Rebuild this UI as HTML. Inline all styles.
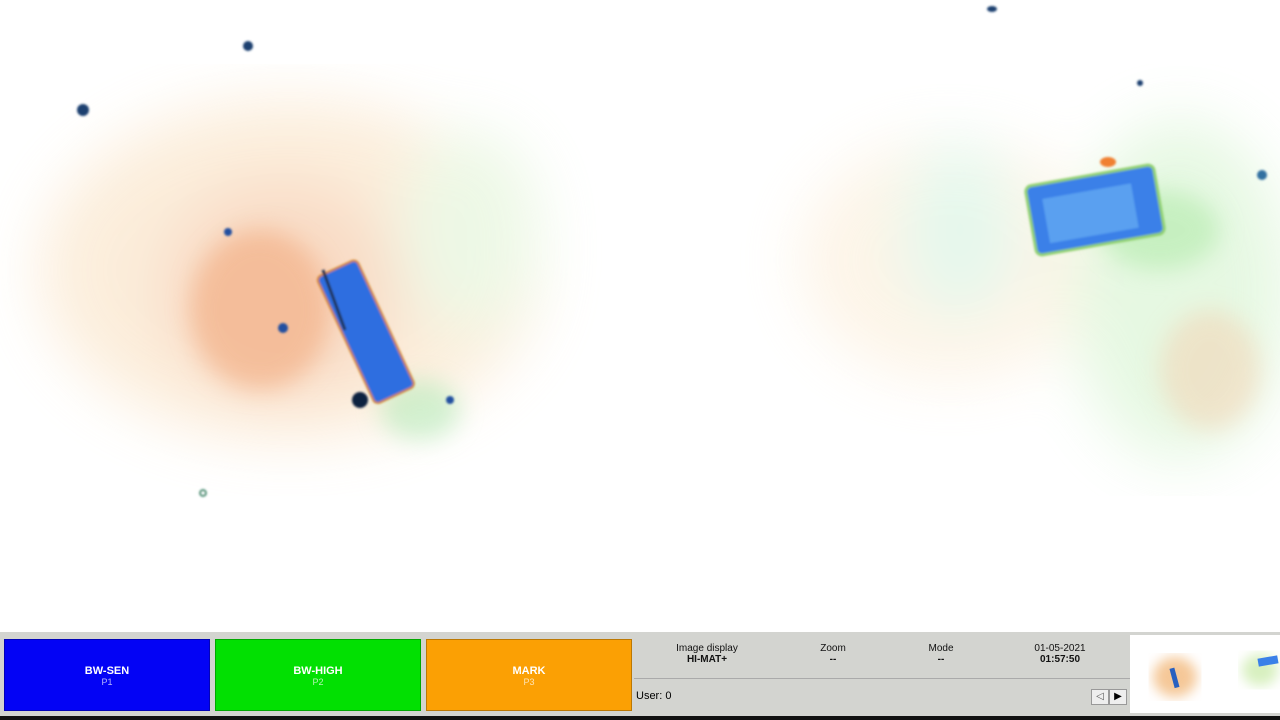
<!DOCTYPE html>
<html><head><style>
body{margin:0;width:1280px;height:720px;overflow:hidden;background:#fff;font-family:"Liberation Sans",sans-serif;position:relative}
.bar{position:absolute;left:0;top:632px;width:1280px;height:84px;background:#d3d4d0}
.blk{position:absolute;left:0;top:716px;width:1280px;height:4px;background:#111}
.btn{position:absolute;top:639px;height:72px;width:206px;text-align:center;color:#fff;font-size:11px;font-weight:bold;box-sizing:border-box;border:1px solid rgba(0,0,0,.25)}
.btn span{display:block;font-weight:normal;font-size:9px;opacity:.7}
.lab{position:absolute;font-size:10px;text-align:center;width:110px;color:#111}
.lab b{display:block;font-size:10px}
</style></head><body>
<svg width="1280" height="632" style="position:absolute;left:0;top:0">
<defs>
<filter id="b1"><feGaussianBlur stdDeviation="30"/></filter>
<filter id="b2"><feGaussianBlur stdDeviation="12"/></filter>
<filter id="b3"><feGaussianBlur stdDeviation="1"/></filter>
</defs>
<g filter="url(#b1)" opacity=".45">
<ellipse cx="290" cy="270" rx="250" ry="170" fill="#f8d9b0"/>
<ellipse cx="280" cy="290" rx="120" ry="110" fill="#f2b080"/>
<ellipse cx="950" cy="260" rx="150" ry="120" fill="#fbe8cc"/>
<ellipse cx="1180" cy="290" rx="110" ry="170" fill="#c8f0c0"/>
<ellipse cx="960" cy="230" rx="60" ry="90" fill="#c8f0d8"/>
<ellipse cx="470" cy="230" rx="70" ry="100" fill="#d8f0c8"/>
</g>
<g filter="url(#b2)" opacity=".5">
<ellipse cx="260" cy="310" rx="70" ry="80" fill="#f0a070"/>
<ellipse cx="1210" cy="370" rx="50" ry="60" fill="#f4d0b0"/>
<ellipse cx="1160" cy="230" rx="60" ry="40" fill="#a8e8a0"/>
<ellipse cx="420" cy="410" rx="40" ry="30" fill="#a8e8b0"/>
</g>
<g filter="url(#b3)">
<g transform="rotate(-25 365 330)">
<rect x="343" y="262" width="44" height="140" rx="5" fill="#2f6ee0" stroke="#d08020" stroke-width="2"/>
</g>
<line x1="323" y1="270" x2="345" y2="330" stroke="#203050" stroke-width="3"/>
<g transform="rotate(-10 1095 210)">
<rect x="1030" y="175" width="130" height="70" rx="6" fill="#3a80e8" stroke="#90d070" stroke-width="3"/>
<rect x="1045" y="190" width="90" height="45" fill="#5aa0f0"/>
</g>
<ellipse cx="1108" cy="162" rx="8" ry="5" fill="#f08030"/>
<circle cx="360" cy="400" r="8" fill="#102040"/>
<circle cx="248" cy="46" r="5" fill="#1a4070"/>
<circle cx="83" cy="110" r="6" fill="#1a4070"/>
<circle cx="283" cy="328" r="5" fill="#2050a0"/>
<circle cx="228" cy="232" r="4" fill="#2050a0"/>
<circle cx="450" cy="400" r="4" fill="#2050a0"/>
<circle cx="203" cy="493" r="3" fill="none" stroke="#207050" stroke-width="1.5"/>
<ellipse cx="992" cy="9" rx="5" ry="3" fill="#1a4070"/>
<circle cx="1140" cy="83" r="3" fill="#1a4070"/>
<circle cx="1262" cy="175" r="5" fill="#3070a0"/>
</g>
</svg>
<div class="bar"></div>
<div class="blk"></div>
<div class="btn" style="left:4px;background:#0303f5;padding-top:25px">BW-SEN<span>P1</span></div>
<div class="btn" style="left:215px;background:#02e002;padding-top:25px">BW-HIGH<span>P2</span></div>
<div class="btn" style="left:426px;background:#fba004;padding-top:25px">MARK<span>P3</span></div>
<div class="lab" style="left:652px;top:643px">Image display<b>HI-MAT+</b></div>
<div class="lab" style="left:778px;top:643px">Zoom<b>--</b></div>
<div class="lab" style="left:886px;top:643px">Mode<b>--</b></div>
<div class="lab" style="left:1005px;top:643px">01-05-2021<b>01:57:50</b></div>
<div style="position:absolute;left:634px;top:678px;width:496px;height:1px;background:#aaa"></div>
<div style="position:absolute;left:636px;top:690px;font-size:11px">User: 0</div>
<div style="position:absolute;left:1091px;top:689px;width:16px;height:14px;background:#eee;border:1px solid #999;font-size:10px;text-align:center;line-height:14px;color:#555">◁</div>
<div style="position:absolute;left:1109px;top:689px;width:16px;height:14px;background:#eee;border:1px solid #999;font-size:10px;text-align:center;line-height:14px">▶</div>
<svg width="150" height="78" style="position:absolute;left:1130px;top:635px;background:#fff">
<defs><filter id="t"><feGaussianBlur stdDeviation="6"/></filter></defs>
<ellipse cx="45" cy="42" rx="22" ry="20" fill="#f5c898" filter="url(#t)"/>
<ellipse cx="130" cy="35" rx="18" ry="16" fill="#d8f0c0" filter="url(#t)"/>
<rect x="42" y="33" width="5" height="20" fill="#2860c0" transform="rotate(-15 44 43)"/>
<rect x="128" y="22" width="20" height="8" fill="#3a80e8" transform="rotate(-10 138 26)"/>
</svg>
</body></html>
